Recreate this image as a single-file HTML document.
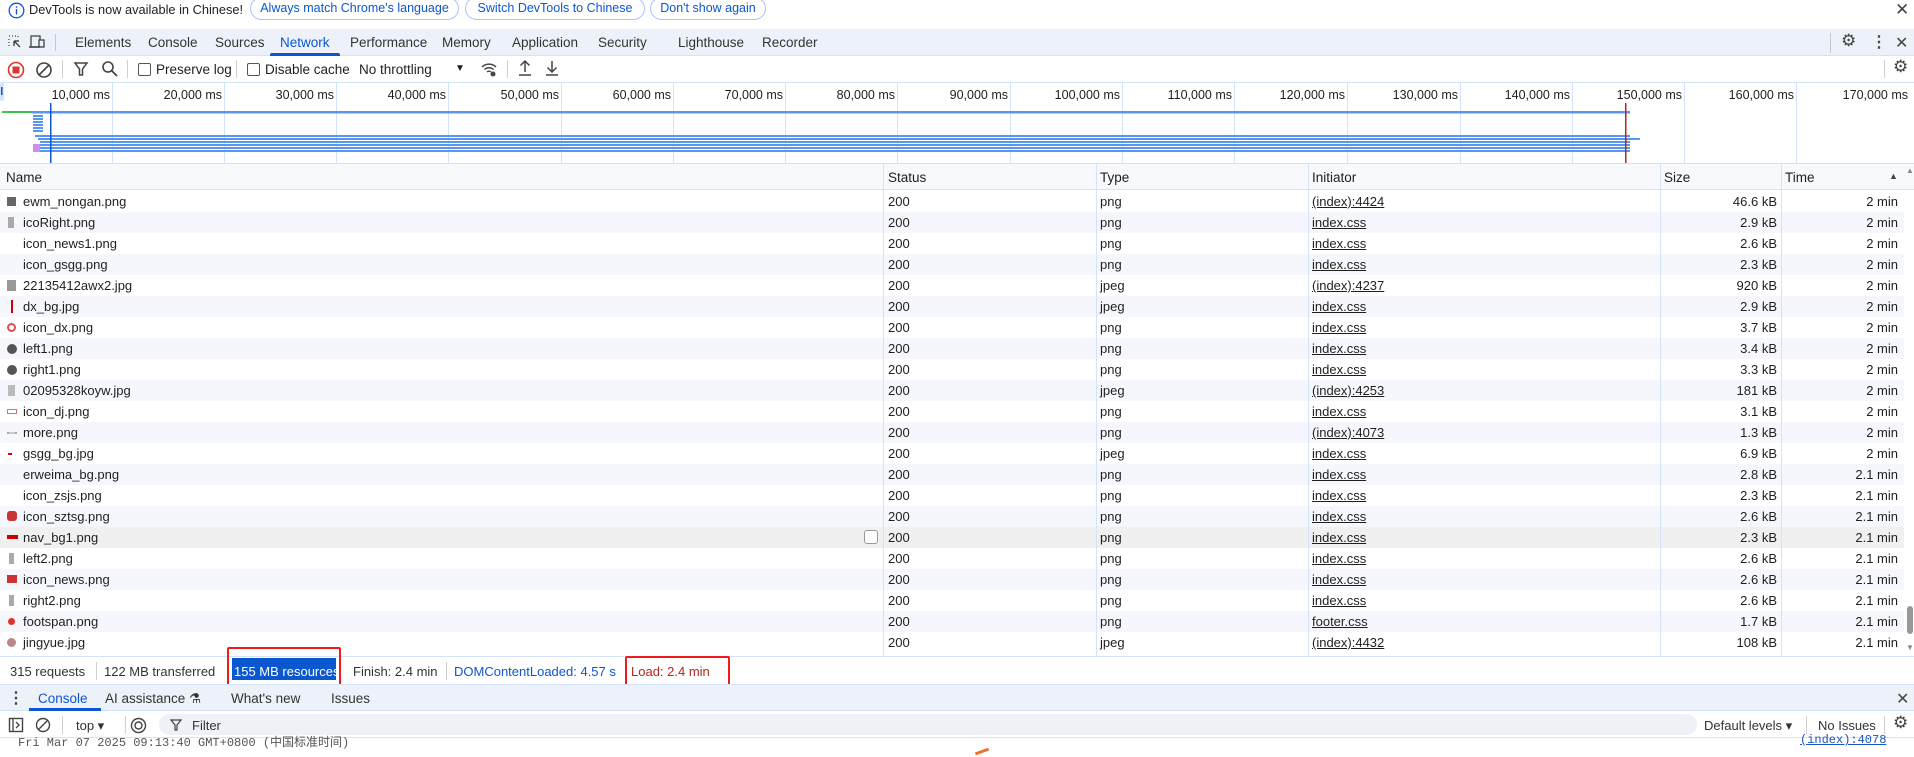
<!DOCTYPE html>
<html><head><meta charset="utf-8"><style>
*{box-sizing:border-box;margin:0;padding:0}
body{width:1914px;height:757px;overflow:hidden;background:#fff;font-family:"Liberation Sans",sans-serif;font-size:13px;color:#1f1f1f;position:relative}
.a{position:absolute;white-space:nowrap}
.btn{position:absolute;top:-3px;height:23px;border:1px solid #a8c7fa;border-radius:12px;color:#0b57d0;font-size:12.5px;line-height:21px;text-align:center}
.row{position:absolute;left:0;width:1904px;height:21px;line-height:21px;font-size:13px}
.row span{position:absolute}
.u{text-decoration:underline}
.vl{position:absolute;width:1px;background:#d3e3fd}
</style></head><body>
<!-- infobar -->
<svg class="a" style="left:8px;top:2px" width="17" height="17" viewBox="0 0 17 17"><circle cx="8.5" cy="8.5" r="7.3" fill="none" stroke="#0b57d0" stroke-width="1.3"/><rect x="7.8" y="7" width="1.4" height="5.5" fill="#0b57d0"/><rect x="7.8" y="4.3" width="1.4" height="1.5" fill="#0b57d0"/></svg>
<div class="a" style="left:29px;top:2px;font-size:12.8px">DevTools is now available in Chinese!</div>
<div class="btn" style="left:250px;width:209px">Always match Chrome's language</div>
<div class="btn" style="left:465px;width:180px">Switch DevTools to Chinese</div>
<div class="btn" style="left:650px;width:116px">Don't show again</div>
<div class="a" style="left:1895px;top:0;font-size:17px;color:#444">✕</div>
<!-- tab bar -->
<div class="a" style="left:0;top:29px;width:1914px;height:27px;background:#edf1f9;border-bottom:1px solid #d3e3fd"></div>
<svg class="a" style="left:7px;top:34px" width="16" height="16" viewBox="0 0 16 16"><path d="M2 2h1M5 2h1M8 2h1M2 5v1M2 8v1M2 11v1M11 2v1" stroke="#444" stroke-width="1.2"/><path d="M7 7l6 6M7 7v5M7 7h5" stroke="#444" stroke-width="1.4" fill="none"/></svg>
<svg class="a" style="left:29px;top:34px" width="18" height="16" viewBox="0 0 18 16"><rect x="2" y="2" width="9" height="11" fill="none" stroke="#444" stroke-width="1.3"/><rect x="10" y="6" width="5" height="7" fill="#edf1f9" stroke="#444" stroke-width="1.3"/><path d="M0 13h11" stroke="#444" stroke-width="1.5"/></svg>
<div class="a" style="left:55px;top:34px;width:1px;height:17px;background:#c4c7cc"></div>
<div class="a" style="top:35px;font-size:13.5px;color:#333;left:75px">Elements</div>
<div class="a" style="top:35px;font-size:13.5px;color:#333;left:148px">Console</div>
<div class="a" style="top:35px;font-size:13.5px;color:#333;left:215px">Sources</div>
<div class="a" style="top:35px;font-size:13.5px;color:#0b57d0;left:280px">Network</div>
<div class="a" style="left:270px;top:53px;width:70px;height:3px;background:#0b57d0;border-radius:2px 2px 0 0"></div>
<div class="a" style="top:35px;font-size:13.5px;color:#333;left:350px">Performance</div>
<div class="a" style="top:35px;font-size:13.5px;color:#333;left:442px">Memory</div>
<div class="a" style="top:35px;font-size:13.5px;color:#333;left:512px">Application</div>
<div class="a" style="top:35px;font-size:13.5px;color:#333;left:598px">Security</div>
<div class="a" style="top:35px;font-size:13.5px;color:#333;left:678px">Lighthouse</div>
<div class="a" style="top:35px;font-size:13.5px;color:#333;left:762px">Recorder</div>
<div class="a" style="left:1830px;top:33px;width:1px;height:20px;background:#c4c7cc"></div>
<div class="a" style="left:1841px;top:31px;font-size:17px;color:#444">⚙</div>
<div class="a" style="left:1871px;top:32px;font-size:16px;color:#444;font-weight:bold">⋮</div>
<div class="a" style="left:1895px;top:33px;font-size:16px;color:#444">✕</div>
<!-- toolbar -->
<svg class="a" style="left:7px;top:61px" width="18" height="18"><circle cx="9" cy="9" r="7.5" fill="none" stroke="#dc362e" stroke-width="1.6"/><rect x="5.5" y="5.5" width="7" height="7" rx="1" fill="#dc362e"/></svg>
<svg class="a" style="left:35px;top:61px" width="18" height="18"><circle cx="9" cy="9" r="7" fill="none" stroke="#444" stroke-width="1.6"/><path d="M4 14L14 4" stroke="#444" stroke-width="1.6"/></svg>
<div class="a" style="left:62px;top:60px;width:1px;height:18px;background:#d0d0d0"></div>
<svg class="a" style="left:73px;top:61px" width="16" height="16"><path d="M2 2h12l-4.5 6v6h-3V8z" fill="none" stroke="#444" stroke-width="1.5"/></svg>
<svg class="a" style="left:101px;top:60px" width="17" height="17"><circle cx="7" cy="7" r="5" fill="none" stroke="#444" stroke-width="1.6"/><path d="M10.5 10.5L16 16" stroke="#444" stroke-width="1.8"/></svg>
<div class="a" style="left:127px;top:60px;width:1px;height:18px;background:#d0d0d0"></div>
<div class="a" style="left:138px;top:63px;width:13px;height:13px;border:1.3px solid #555;border-radius:2px"></div>
<div class="a" style="left:156px;top:62px;font-size:13.5px">Preserve log</div>
<div class="a" style="left:236px;top:60px;width:1px;height:18px;background:#d0d0d0"></div>
<div class="a" style="left:247px;top:63px;width:13px;height:13px;border:1.3px solid #555;border-radius:2px"></div>
<div class="a" style="left:265px;top:62px;font-size:13.5px">Disable cache</div>
<div class="a" style="left:359px;top:62px;font-size:13.5px">No throttling</div>
<div class="a" style="left:455px;top:63px;font-size:10px">▼</div>
<svg class="a" style="left:480px;top:60px" width="18" height="18"><path d="M2 7a10 10 0 0 1 14 0M4.5 9.5a6.5 6.5 0 0 1 9 0M7 12a3 3 0 0 1 4 0" fill="none" stroke="#444" stroke-width="1.5"/><circle cx="13" cy="14" r="2.5" fill="#444"/></svg>
<div class="a" style="left:507px;top:60px;width:1px;height:18px;background:#d0d0d0"></div>
<svg class="a" style="left:517px;top:59px" width="16" height="18"><path d="M8 13V2M3.5 6.5L8 2l4.5 4.5M2 16h12" fill="none" stroke="#444" stroke-width="1.5"/></svg>
<svg class="a" style="left:544px;top:59px" width="16" height="18"><path d="M8 2v11M3.5 8.5L8 13l4.5-4.5M2 16h12" fill="none" stroke="#444" stroke-width="1.5"/></svg>
<div class="a" style="left:1884px;top:60px;width:1px;height:18px;background:#d0d0d0"></div>
<div class="a" style="left:1893px;top:57px;font-size:17px;color:#444">⚙</div>
<!-- overview -->
<div class="a" style="left:0;top:82px;width:1914px;height:1px;background:#d3e3fd"></div>
<svg class="a" style="left:0;top:83px" width="1914" height="81">
<rect x="0" y="0" width="4" height="18" rx="2" fill="#d3e3fd"/><rect x="1" y="4" width="1.5" height="8" fill="#0b57d0"/>
<g stroke="#d3e3fd" stroke-width="1">
<path d="M112.5 0v81M224.5 0v81M336.5 0v81M448.5 0v81M561.5 0v81M673.5 0v81M785.5 0v81M897.5 0v81M1010.5 0v81M1122.5 0v81M1234.5 0v81M1347.5 0v81M1460.5 0v81M1572.5 0v81M1684.5 0v81M1796.5 0v81"/>
</g>
<g font-family="Liberation Sans" font-size="12.5" fill="#1f1f1f" text-anchor="end">
<text x="110" y="16">10,000 ms</text><text x="222" y="16">20,000 ms</text><text x="334" y="16">30,000 ms</text><text x="446" y="16">40,000 ms</text><text x="559" y="16">50,000 ms</text><text x="671" y="16">60,000 ms</text><text x="783" y="16">70,000 ms</text><text x="895" y="16">80,000 ms</text><text x="1008" y="16">90,000 ms</text><text x="1120" y="16">100,000 ms</text><text x="1232" y="16">110,000 ms</text><text x="1345" y="16">120,000 ms</text><text x="1458" y="16">130,000 ms</text><text x="1570" y="16">140,000 ms</text><text x="1682" y="16">150,000 ms</text><text x="1794" y="16">160,000 ms</text><text x="1908" y="16">170,000 ms</text>
</g>
<rect x="2" y="28" width="30" height="2" fill="#3ec24f"/>
<rect x="32" y="28" width="1598" height="2.5" fill="#5a95f0"/>
<g fill="#5a95f0"><rect x="33" y="32" width="10" height="2"/><rect x="33" y="35" width="10" height="2"/><rect x="33" y="38" width="10" height="2"/><rect x="33" y="41" width="10" height="2"/><rect x="33" y="44" width="10" height="2"/><rect x="33" y="47" width="10" height="2"/>
<rect x="35" y="52" width="1595" height="2"/><rect x="38" y="55" width="1602" height="2"/><rect x="40" y="58" width="1590" height="2"/><rect x="40" y="61" width="1590" height="2"/><rect x="40" y="64" width="1590" height="2"/><rect x="40" y="67" width="1590" height="2"/></g>
<rect x="33" y="61" width="7" height="8" fill="#d08cf0"/>
<rect x="50" y="20" width="1.5" height="61" fill="#0b57d0"/>
<rect x="1625" y="20" width="1.5" height="61" fill="#b3261e"/>
</svg>
<!-- header -->
<div class="a" style="left:0;top:163px;width:1914px;height:27px;background:#f8f9fd;border-top:1px solid #d3e3fd;border-bottom:1px solid #d3e3fd"></div>
<div class="a" style="left:6px;top:170px;font-size:13.5px">Name</div>
<div class="a" style="left:888px;top:170px;font-size:13.5px">Status</div>
<div class="a" style="left:1100px;top:170px;font-size:13.5px">Type</div>
<div class="a" style="left:1312px;top:170px;font-size:13.5px">Initiator</div>
<div class="a" style="left:1664px;top:170px;font-size:13.5px">Size</div>
<div class="a" style="left:1785px;top:170px;font-size:13.5px">Time</div>
<div class="a" style="left:1889px;top:171px;font-size:9px;color:#444">▲</div>
<div class="a" style="left:1906px;top:166px;font-size:8px;color:#888">▲</div>
<div class="row" style="top:191px;background:#fff"><span style="left:7px;top:6px;width:9px;height:9px;background:#666"></span><span style="left:23px">ewm_nongan.png</span><span style="left:888px">200</span><span style="left:1100px">png</span><span class="u" style="left:1312px">(index):4424</span><span style="right:127px">46.6 kB</span><span style="right:6px">2 min</span></div>
<div class="row" style="top:212px;background:#f5f7fd"><span style="left:8px;top:5px;width:6px;height:11px;background:#aaa"></span><span style="left:23px">icoRight.png</span><span style="left:888px">200</span><span style="left:1100px">png</span><span class="u" style="left:1312px">index.css</span><span style="right:127px">2.9 kB</span><span style="right:6px">2 min</span></div>
<div class="row" style="top:233px;background:#fff"><span style="left:23px">icon_news1.png</span><span style="left:888px">200</span><span style="left:1100px">png</span><span class="u" style="left:1312px">index.css</span><span style="right:127px">2.6 kB</span><span style="right:6px">2 min</span></div>
<div class="row" style="top:254px;background:#f5f7fd"><span style="left:23px">icon_gsgg.png</span><span style="left:888px">200</span><span style="left:1100px">png</span><span class="u" style="left:1312px">index.css</span><span style="right:127px">2.3 kB</span><span style="right:6px">2 min</span></div>
<div class="row" style="top:275px;background:#fff"><span style="left:7px;top:5px;width:9px;height:11px;background:#999"></span><span style="left:23px">22135412awx2.jpg</span><span style="left:888px">200</span><span style="left:1100px">jpeg</span><span class="u" style="left:1312px">(index):4237</span><span style="right:127px">920 kB</span><span style="right:6px">2 min</span></div>
<div class="row" style="top:296px;background:#f5f7fd"><span style="left:11px;top:4px;width:2px;height:13px;background:#c00"></span><span style="left:23px">dx_bg.jpg</span><span style="left:888px">200</span><span style="left:1100px">jpeg</span><span class="u" style="left:1312px">index.css</span><span style="right:127px">2.9 kB</span><span style="right:6px">2 min</span></div>
<div class="row" style="top:317px;background:#fff"><span style="left:7px;top:6px;width:9px;height:9px;border-radius:50%;border:2px solid #e05050"></span><span style="left:23px">icon_dx.png</span><span style="left:888px">200</span><span style="left:1100px">png</span><span class="u" style="left:1312px">index.css</span><span style="right:127px">3.7 kB</span><span style="right:6px">2 min</span></div>
<div class="row" style="top:338px;background:#f5f7fd"><span style="left:7px;top:6px;width:10px;height:10px;border-radius:50%;background:#555"></span><span style="left:23px">left1.png</span><span style="left:888px">200</span><span style="left:1100px">png</span><span class="u" style="left:1312px">index.css</span><span style="right:127px">3.4 kB</span><span style="right:6px">2 min</span></div>
<div class="row" style="top:359px;background:#fff"><span style="left:7px;top:6px;width:10px;height:10px;border-radius:50%;background:#555"></span><span style="left:23px">right1.png</span><span style="left:888px">200</span><span style="left:1100px">png</span><span class="u" style="left:1312px">index.css</span><span style="right:127px">3.3 kB</span><span style="right:6px">2 min</span></div>
<div class="row" style="top:380px;background:#f5f7fd"><span style="left:8px;top:5px;width:7px;height:11px;background:#bbb"></span><span style="left:23px">02095328koyw.jpg</span><span style="left:888px">200</span><span style="left:1100px">jpeg</span><span class="u" style="left:1312px">(index):4253</span><span style="right:127px">181 kB</span><span style="right:6px">2 min</span></div>
<div class="row" style="top:401px;background:#fff"><span style="left:7px;top:8px;width:10px;height:5px;border:1.5px solid #e07070"></span><span style="left:23px">icon_dj.png</span><span style="left:888px">200</span><span style="left:1100px">png</span><span class="u" style="left:1312px">index.css</span><span style="right:127px">3.1 kB</span><span style="right:6px">2 min</span></div>
<div class="row" style="top:422px;background:#f5f7fd"><span style="left:7px;top:10px;width:10px;height:2px;border-left:2px dotted #aaa;border-right:2px dotted #aaa;background:#ccc"></span><span style="left:23px">more.png</span><span style="left:888px">200</span><span style="left:1100px">png</span><span class="u" style="left:1312px">(index):4073</span><span style="right:127px">1.3 kB</span><span style="right:6px">2 min</span></div>
<div class="row" style="top:443px;background:#fff"><span style="left:8px;top:10px;width:4px;height:2px;background:#d00"></span><span style="left:23px">gsgg_bg.jpg</span><span style="left:888px">200</span><span style="left:1100px">jpeg</span><span class="u" style="left:1312px">index.css</span><span style="right:127px">6.9 kB</span><span style="right:6px">2 min</span></div>
<div class="row" style="top:464px;background:#f5f7fd"><span style="left:23px">erweima_bg.png</span><span style="left:888px">200</span><span style="left:1100px">png</span><span class="u" style="left:1312px">index.css</span><span style="right:127px">2.8 kB</span><span style="right:6px">2.1 min</span></div>
<div class="row" style="top:485px;background:#fff"><span style="left:23px">icon_zsjs.png</span><span style="left:888px">200</span><span style="left:1100px">png</span><span class="u" style="left:1312px">index.css</span><span style="right:127px">2.3 kB</span><span style="right:6px">2.1 min</span></div>
<div class="row" style="top:506px;background:#f5f7fd"><span style="left:7px;top:5px;width:10px;height:10px;border-radius:3px;background:#c33"></span><span style="left:23px">icon_sztsg.png</span><span style="left:888px">200</span><span style="left:1100px">png</span><span class="u" style="left:1312px">index.css</span><span style="right:127px">2.6 kB</span><span style="right:6px">2.1 min</span></div>
<div class="row" style="top:527px;background:#f0f0f0"><span style="left:7px;top:8px;width:11px;height:4px;background:#c00"></span><span style="left:23px">nav_bg1.png</span><span style="left:864px;top:3px;width:14px;height:14px;border:1px solid #999;border-radius:3px;background:#fff"></span><span style="left:888px">200</span><span style="left:1100px">png</span><span class="u" style="left:1312px">index.css</span><span style="right:127px">2.3 kB</span><span style="right:6px">2.1 min</span></div>
<div class="row" style="top:548px;background:#fff"><span style="left:9px;top:5px;width:5px;height:11px;background:#aaa"></span><span style="left:23px">left2.png</span><span style="left:888px">200</span><span style="left:1100px">png</span><span class="u" style="left:1312px">index.css</span><span style="right:127px">2.6 kB</span><span style="right:6px">2.1 min</span></div>
<div class="row" style="top:569px;background:#f5f7fd"><span style="left:7px;top:6px;width:10px;height:8px;background:#c33"></span><span style="left:23px">icon_news.png</span><span style="left:888px">200</span><span style="left:1100px">png</span><span class="u" style="left:1312px">index.css</span><span style="right:127px">2.6 kB</span><span style="right:6px">2.1 min</span></div>
<div class="row" style="top:590px;background:#fff"><span style="left:9px;top:5px;width:5px;height:11px;background:#aaa"></span><span style="left:23px">right2.png</span><span style="left:888px">200</span><span style="left:1100px">png</span><span class="u" style="left:1312px">index.css</span><span style="right:127px">2.6 kB</span><span style="right:6px">2.1 min</span></div>
<div class="row" style="top:611px;background:#f5f7fd"><span style="left:8px;top:7px;width:7px;height:7px;border-radius:50%;background:#e03030"></span><span style="left:23px">footspan.png</span><span style="left:888px">200</span><span style="left:1100px">png</span><span class="u" style="left:1312px">footer.css</span><span style="right:127px">1.7 kB</span><span style="right:6px">2.1 min</span></div>
<div class="row" style="top:632px;background:#fff"><span style="left:7px;top:6px;width:9px;height:9px;border-radius:50%;background:#b88"></span><span style="left:23px">jingyue.jpg</span><span style="left:888px">200</span><span style="left:1100px">jpeg</span><span class="u" style="left:1312px">(index):4432</span><span style="right:127px">108 kB</span><span style="right:6px">2.1 min</span></div>
<div class="vl" style="left:883px;top:163px;height:493px"></div>
<div class="vl" style="left:1096px;top:163px;height:493px"></div>
<div class="vl" style="left:1308px;top:163px;height:493px"></div>
<div class="vl" style="left:1660px;top:163px;height:493px"></div>
<div class="vl" style="left:1781px;top:163px;height:493px"></div>
<div class="a" style="left:1907px;top:606px;width:6px;height:28px;background:#999;border-radius:3px"></div>
<div class="a" style="left:1906px;top:643px;font-size:8px;color:#888">▼</div>
<!-- status bar -->
<div class="a" style="left:0;top:656px;width:1914px;height:1px;background:#d3e3fd"></div>
<div class="a" style="left:10px;top:664px;color:#333">315 requests</div>
<div class="a" style="left:96px;top:662px;width:1px;height:18px;background:#d0d0d0"></div>
<div class="a" style="left:104px;top:664px;color:#333">122 MB transferred</div>
<div class="a" style="left:227px;top:647px;width:114px;height:40px;border:2px solid #f01c1c;border-radius:2px"></div>
<div class="a" style="left:232px;top:658px;width:104px;height:22px;background:#0b57d0"></div>
<div class="a" style="left:234px;top:664px;color:#fff">155 MB resources</div>
<div class="a" style="left:353px;top:664px;color:#333">Finish: 2.4 min</div>
<div class="a" style="left:446px;top:662px;width:1px;height:18px;background:#d0d0d0"></div>
<div class="a" style="left:454px;top:664px;color:#0b57d0">DOMContentLoaded: 4.57 s</div>
<div class="a" style="left:625px;top:656px;width:105px;height:31px;border:2px solid #f01c1c;border-radius:2px"></div>
<div class="a" style="left:631px;top:664px;color:#b3261e">Load: 2.4 min</div>
<!-- drawer -->
<div class="a" style="left:0;top:684px;width:1914px;height:27px;background:#edf1f9;border-top:1px solid #d3e3fd;border-bottom:1px solid #d3e3fd"></div>
<div class="a" style="left:8px;top:688px;font-size:16px;font-weight:bold;color:#444">⋮</div>
<div class="a" style="left:38px;top:691px;font-size:13.5px;color:#0b57d0">Console</div>
<div class="a" style="left:29px;top:708px;width:72px;height:3px;background:#0b57d0"></div>
<div class="a" style="left:105px;top:691px;font-size:13.5px;color:#333">AI assistance ⚗</div>
<div class="a" style="left:231px;top:691px;font-size:13.5px;color:#333">What's new</div>
<div class="a" style="left:331px;top:691px;font-size:13.5px;color:#333">Issues</div>
<div class="a" style="left:1896px;top:689px;font-size:16px;color:#444">✕</div>
<!-- console toolbar -->
<svg class="a" style="left:8px;top:717px" width="16" height="16"><rect x="1.5" y="1.5" width="13" height="13" fill="none" stroke="#444" stroke-width="1.4"/><path d="M5 2v12M8 5l3 3-3 3" fill="none" stroke="#444" stroke-width="1.3"/></svg>
<svg class="a" style="left:35px;top:717px" width="16" height="16"><circle cx="8" cy="8" r="6.5" fill="none" stroke="#444" stroke-width="1.4"/><path d="M3.5 12.5l9-9" stroke="#444" stroke-width="1.4"/></svg>
<div class="a" style="left:62px;top:716px;width:1px;height:18px;background:#d0d0d0"></div>
<div class="a" style="left:76px;top:718px;color:#333">top ▾</div>
<div class="a" style="left:125px;top:716px;width:1px;height:18px;background:#d0d0d0"></div>
<svg class="a" style="left:130px;top:717px" width="17" height="17"><circle cx="8.5" cy="8.5" r="7" fill="none" stroke="#444" stroke-width="1.4"/><circle cx="8.5" cy="8.5" r="3.5" fill="none" stroke="#444" stroke-width="1.4"/></svg>
<div class="a" style="left:159px;top:714px;width:1538px;height:21px;background:#eef1f8;border-radius:11px"></div>
<svg class="a" style="left:170px;top:719px" width="12" height="12"><path d="M1 1h10l-4 5v5h-2V6z" fill="none" stroke="#444" stroke-width="1.2"/></svg>
<div class="a" style="left:192px;top:718px;color:#333">Filter</div>
<div class="a" style="left:1704px;top:718px;color:#333">Default levels ▾</div>
<div class="a" style="left:1806px;top:716px;width:1px;height:18px;background:#d0d0d0"></div>
<div class="a" style="left:1818px;top:718px;color:#333">No Issues</div>
<div class="a" style="left:1884px;top:716px;width:1px;height:18px;background:#d0d0d0"></div>
<div class="a" style="left:1893px;top:713px;font-size:17px;color:#444">⚙</div>
<div class="a" style="left:0;top:737px;width:1914px;height:1px;background:#d3e3fd"></div>
<div class="a" style="left:18px;top:733px;font-size:12px;color:#555;font-family:'Liberation Mono','Noto Sans CJK SC',monospace">Fri Mar 07 2025 09:13:40 GMT+0800 (中国标准时间)</div>
<div class="a u" style="left:1800px;top:733px;font-size:12px;color:#1a55c0;font-family:'Liberation Mono',monospace">(index):4078</div>
<div class="a" style="left:975px;top:750px;width:14px;height:3px;background:#f07030;transform:rotate(-20deg)"></div>
</body></html>
